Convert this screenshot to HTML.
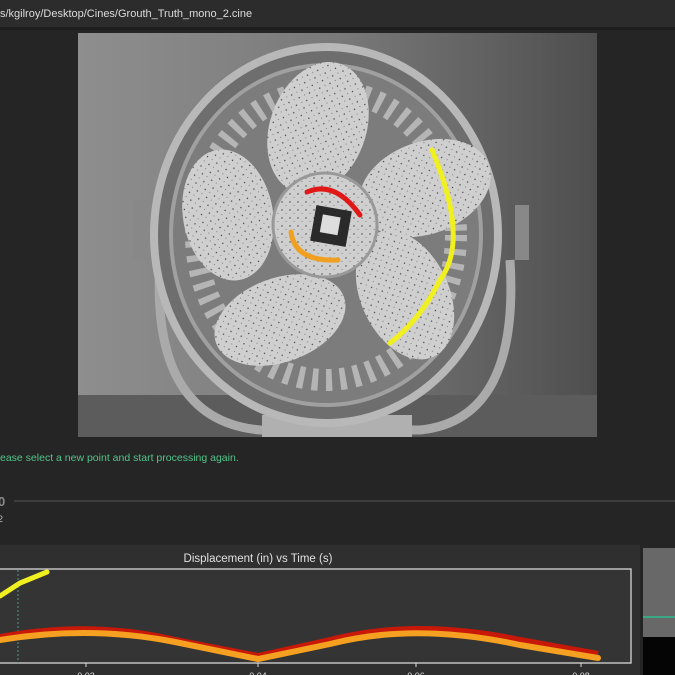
<!DOCTYPE html>
<html><head><meta charset="utf-8"><style>
html,body{margin:0;padding:0;width:675px;height:675px;overflow:hidden;background:#252525;font-family:"Liberation Sans",sans-serif}
</style></head><body>
<svg width="675" height="675" viewBox="0 0 675 675" xmlns="http://www.w3.org/2000/svg" style="position:absolute;left:0;top:0">
<defs>
<linearGradient id="bg" x1="0" x2="1" y1="0" y2="0">
<stop offset="0" stop-color="#8e8e8e"/><stop offset="0.5" stop-color="#7a7a7a"/><stop offset="1" stop-color="#4e4e4e"/>
</linearGradient>
<pattern id="spk" width="8" height="8" patternUnits="userSpaceOnUse">
<rect width="8" height="8" fill="#cfcfcf"/><circle cx="2" cy="2" r="0.7" fill="#444"/><circle cx="6" cy="5.5" r="0.5" fill="#666"/>
</pattern>
</defs>
<rect x="0" y="0" width="675" height="27" fill="#2c2c2c"/>
<rect x="0" y="27" width="675" height="3" fill="#1e1e1e"/>
<text x="0" y="17" font-size="11" fill="#dcdcdc">s/kgilroy/Desktop/Cines/Grouth_Truth_mono_2.cine</text>
<rect x="78" y="33" width="519" height="404" fill="url(#bg)"/>
<rect x="78" y="395" width="519" height="42" fill="#5c5c5c"/>
<path d="M160 260 Q150 420 260 430 L420 430 Q520 420 510 260" fill="none" stroke="#aaa" stroke-width="9"/>
<rect x="262" y="415" width="150" height="22" fill="#b0b0b0"/>
<rect x="133" y="200" width="22" height="60" fill="#888"/>
<rect x="515" y="205" width="14" height="55" fill="#888"/>
<ellipse cx="326" cy="235" rx="172" ry="188" fill="#6e6e6e" stroke="#b8b8b8" stroke-width="8"/>
<ellipse cx="326" cy="235" rx="155" ry="170" fill="#7c7c7c" stroke="#a0a0a0" stroke-width="4"/>
<ellipse cx="326" cy="235" rx="130" ry="145" fill="none" stroke="#b5b5b5" stroke-width="22" stroke-dasharray="6 8"/>
<g fill="url(#spk)">
<ellipse cx="318" cy="128" rx="48" ry="68" transform="rotate(20 318 128)"/>
<ellipse cx="425" cy="188" rx="46" ry="68" transform="rotate(70 425 188)"/>
<ellipse cx="405" cy="295" rx="44" ry="68" transform="rotate(-25 405 295)"/>
<ellipse cx="280" cy="320" rx="42" ry="68" transform="rotate(70 280 320)"/>
<ellipse cx="228" cy="215" rx="45" ry="66" transform="rotate(-10 228 215)"/>
</g>
<circle cx="325" cy="225" r="52" fill="url(#spk)" stroke="#999" stroke-width="3"/>
<rect x="313" y="208" width="36" height="36" fill="#2a2a2a" transform="rotate(10 331 226)"/>
<rect x="321" y="216" width="18" height="18" fill="#ddd" transform="rotate(10 331 226)"/>
<path d="M307 192 Q335 180 360 215" fill="none" stroke="#e01818" stroke-width="5" stroke-linecap="round"/>
<path d="M291 232 Q295 262 338 260" fill="none" stroke="#f0a020" stroke-width="5" stroke-linecap="round"/>
<path d="M432 150 Q470 240 440 280 Q420 320 390 343" fill="none" stroke="#f0f020" stroke-width="5" stroke-linecap="round"/>
<text x="0" y="461" font-size="10.5" fill="#52c48a">ease select a new point and start processing again.</text>
<text x="-2" y="506" font-size="13" font-weight="bold" fill="#8a8a8a">0</text>
<rect x="14" y="500" width="661" height="2" fill="#3c3c3c"/>
<text x="-2" y="522" font-size="9" fill="#bbb">2</text>
<rect x="0" y="545" width="640" height="130" fill="#2f2f2f"/>
<text x="258" y="562" font-size="11.5" fill="#e0e0e0" text-anchor="middle">Displacement (in) vs Time (s)</text>
<rect x="-2" y="569" width="633" height="94" fill="#343434" stroke="#d8d8d8" stroke-width="1.3"/>
<line x1="18" y1="570" x2="18" y2="663" stroke="#4a9a8a" stroke-dasharray="2 2"/>
<path d="M0 637 Q90 620 175 640 L258 656 L330 640 Q415 618 520 640 L598 654" fill="none" stroke="#c81808" stroke-width="6"/>
<path d="M0 640 Q90 625 175 642 L258 659 L330 644 Q415 622 520 645 L598 658" fill="none" stroke="#f5a020" stroke-width="6" stroke-linecap="round"/>
<path d="M0 596 L20 583 L47 572" fill="none" stroke="#f0f020" stroke-width="5" stroke-linecap="round"/>
<g stroke="#ddd"><line x1="86" y1="663" x2="86" y2="667"/><line x1="258" y1="663" x2="258" y2="667"/><line x1="416" y1="663" x2="416" y2="667"/><line x1="581" y1="663" x2="581" y2="667"/></g>
<g font-size="9" fill="#ddd" text-anchor="middle"><text x="86" y="679">0.02</text><text x="258" y="679">0.04</text><text x="416" y="679">0.06</text><text x="581" y="679">0.08</text></g>
<rect x="643" y="548" width="32" height="89" fill="#686868"/>
<rect x="643" y="616" width="32" height="2" fill="#3aa884"/>
<rect x="643" y="637" width="32" height="38" fill="#050505"/>
</svg>
</body></html>
